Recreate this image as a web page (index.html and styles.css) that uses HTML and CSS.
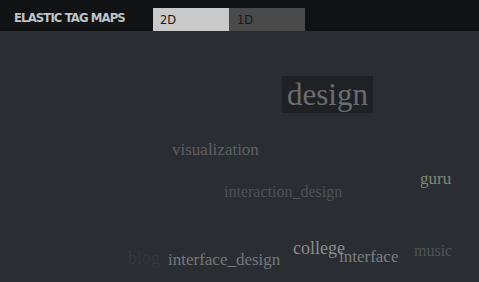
FILE: index.html
```html
<!DOCTYPE html>
<html lang="en">
<head>
    <meta charset="UTF-8">
    <title>Elastic Tag Maps</title>
    <link rel="stylesheet" href="styles.css">
</head>
<body>
    <div class="header">
        <div class="title">ELASTIC TAG MAPS</div>
        <div class="tabs">
            <div class="tab tab-active">2D</div>
            <div class="tab">1D</div>
        </div>
    </div>

    <div class="map">
        <span class="tag tag-focus" style="left: 282px; top: 45px; font-size: 31px;">design</span>
        <span class="tag" style="left: 172px; top: 110px; font-size: 17px; color: #5e6165;">visualization</span>
        <span class="tag" style="left: 224px; top: 153px; font-size: 16px; color: #4f5256;">interaction_design</span>
        <span class="tag" style="left: 420px; top: 139px; font-size: 17px; color: #7d8b73;">guru</span>
        <span class="tag" style="left: 128px; top: 218px; font-size: 18px; color: #35383c;">blog</span>
        <span class="tag" style="left: 168px; top: 220px; font-size: 17px; color: #75787c;">interface_design</span>
        <span class="tag" style="left: 293px; top: 208px; font-size: 18px; color: #8a8c8f;">college</span>
        <span class="tag" style="left: 339px; top: 217px; font-size: 17px; color: #7b7e81;">interface</span>
        <span class="tag" style="left: 414px; top: 212px; font-size: 16px; color: #505357;">music</span>
    </div>
</body>
</html>
```

FILE: styles.css
```css
html, body {
    margin: 0;
    height: 100%;
}
body {
    background-color: #2a2d32;
    font-family: 'DejaVu Sans', Arial, sans-serif;
    overflow: hidden;
}
.header {
    display: flex;
    align-items: flex-end;
    height: 31px;
    background-color: #111214;
}
.title {
    width: 139px;
    padding-left: 14px;
    padding-bottom: 6px;
    color: #bfc3c7;
    font-family: 'DejaVu Sans Condensed', 'DejaVu Sans', sans-serif;
    font-size: 13px;
    font-weight: bold;
    font-stretch: condensed;
    letter-spacing: -0.9px;
    line-height: 14px;
    white-space: nowrap;
}
.tabs {
    display: flex;
}
.tab {
    width: 68px;
    height: 23px;
    padding-left: 8px;
    background-color: #4a4a4b;
    color: #1a1a1a;
    font-size: 11.5px;
    line-height: 24px;
}
.tab-active {
    background-color: #c9c9c9;
    padding-left: 7px;
    width: 69px;
}
.map {
    position: relative;
    height: 251px;
}
.tag {
    position: absolute;
    font-family: 'Liberation Serif', 'Times New Roman', serif;
    line-height: 1;
    white-space: nowrap;
}
.tag-focus {
    padding: 3px 5px;
    background-color: #1f2124;
    color: #6a6d70;
}
```
